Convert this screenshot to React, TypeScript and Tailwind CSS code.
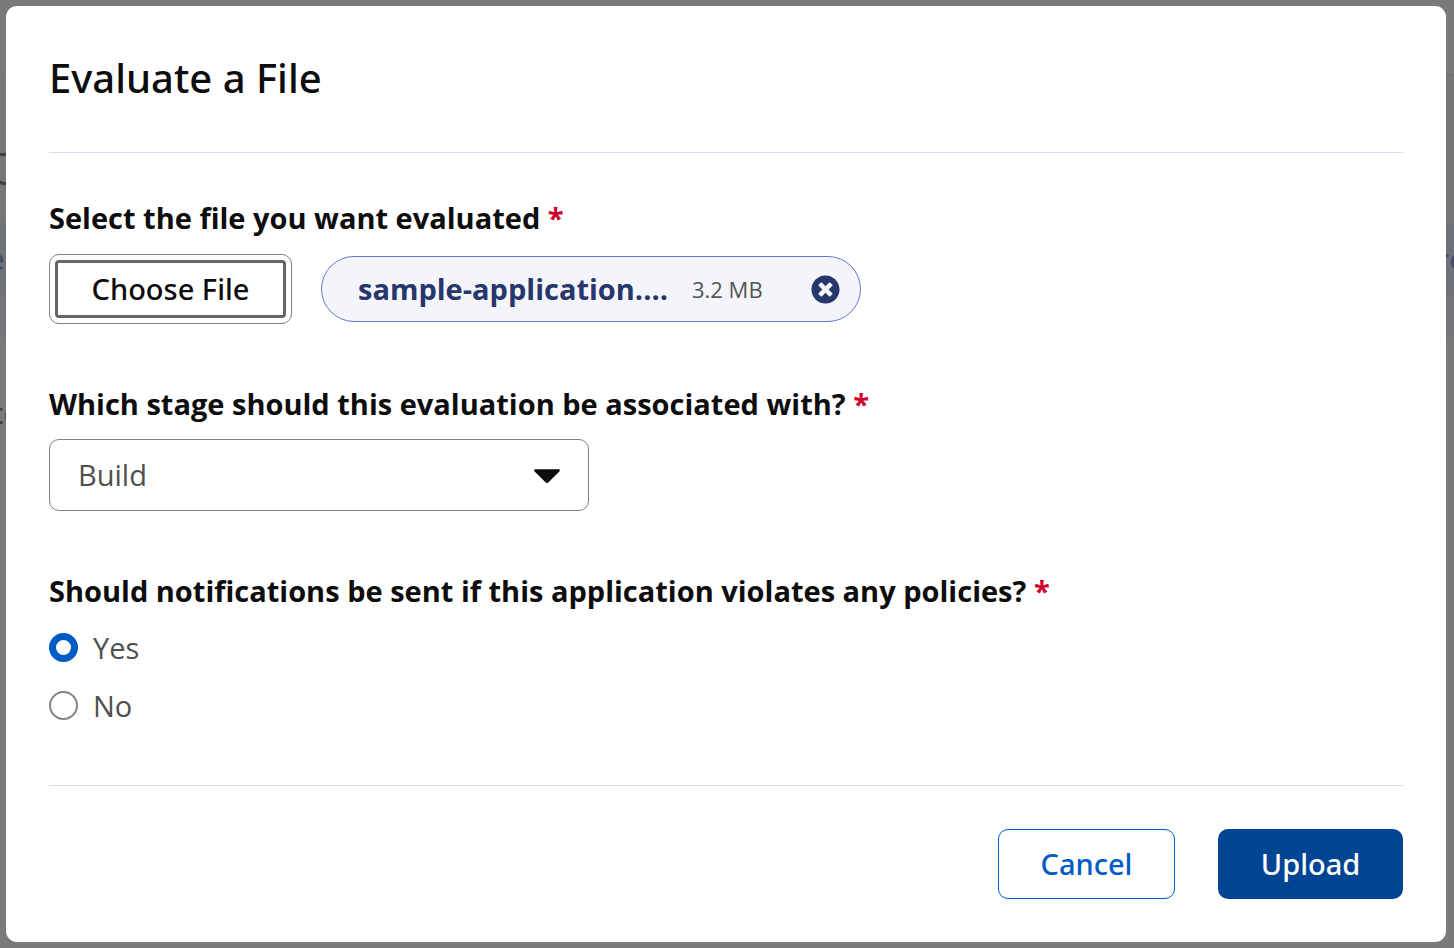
import { useState } from "react";
import type { ReactNode } from "react";

function FieldTitle({ children }: { children: ReactNode }) {
  return (
    <>
      {children} <span className="text-[#d0002f]">*</span>
    </>
  );
}

function PageBehind() {
  return (
    <div
      aria-hidden="true"
      className="col-start-1 row-start-1 flex min-w-0 flex-col overflow-hidden bg-[#7a7a7a] text-[29px] leading-10"
    >
      <div className="h-[74px]" />
      <div className="h-[149px] border-t border-[#727272] bg-[#77777a] pt-[78px]">
        <div className="-ml-1 h-8 w-12 rounded-bl-lg border-[3px] border-[#404040]" />
      </div>
      <div className="flex h-[72px] items-center justify-between bg-[#707279] font-semibold text-[#454d70]">
        <span className="-ml-3">e</span>
        <span className="-mr-3">re</span>
      </div>
      <div className="h-[42px] bg-[#757679]" />
      <div className="flex-1 pt-14 font-semibold text-[#404040]">
        <span className="-ml-2">te</span>
      </div>
    </div>
  );
}

function RadioOption({
  label,
  checked,
  onSelect,
}: {
  label: string;
  checked: boolean;
  onSelect: () => void;
}) {
  return (
    <label className="flex h-[58px] items-center gap-[15px] text-[#505050]">
      <input
        type="radio"
        name="notifications"
        checked={checked}
        onChange={onSelect}
        className="size-[29px] shrink-0 appearance-none rounded-full border-2 border-[#858585] bg-white checked:border-[7px] checked:border-[#005cc5]"
      />
      <span className="pt-0.5">{label}</span>
    </label>
  );
}

export default function App() {
  const [notify, setNotify] = useState(true);
  const [hasFile, setHasFile] = useState(true);

  return (
    <div className="grid min-h-screen grid-cols-1 font-['Open_Sans',sans-serif]">
      <PageBehind />
      <form
        role="dialog"
        aria-labelledby="dialog-title"
        onSubmit={(e) => e.preventDefault()}
        className="z-10 col-start-1 row-start-1 mt-1.5 mr-2 mb-1.5 ml-1.5 flex flex-col rounded-[11px] bg-white px-[43px] pb-[43px] text-[29px] leading-10 text-[#0d0d0d]"
      >
        <header className="border-b border-[#dadaea] pt-[42px] pb-11">
          <h1
            id="dialog-title"
            className="font-['Noto_Sans',sans-serif] text-[40px] leading-[60px] font-medium"
          >
            Evaluate a File
          </h1>
        </header>

        <div className="flex flex-1 flex-col gap-[60px] pt-[45px] pb-12">
          <section>
            <h2 className="font-bold">
              <FieldTitle>Select the file you want evaluated</FieldTitle>
            </h2>
            <div className="mt-4 flex items-center gap-[29px]">
              <button
                type="button"
                onClick={() => setHasFile(true)}
                className="h-[70px] w-[243px] rounded-[10px] border border-[#808080] bg-white font-['Noto_Sans',sans-serif] font-medium outline-3 -outline-offset-9 outline-[#666666]"
              >
                Choose File
              </button>
              {hasFile && (
                <div className="flex h-[66px] w-[540px] items-center rounded-full border border-[#6478c8] bg-[#f4f5fb] pr-5 pl-9">
                  <span className="font-bold text-[#27366b]">sample-application....</span>
                  <span className="ml-6 text-[22px] text-[#555555]">3.2 MB</span>
                  <button
                    type="button"
                    aria-label="Remove file"
                    onClick={() => setHasFile(false)}
                    className="ml-auto"
                  >
                    <svg viewBox="0 0 512 512" className="size-[29px] fill-[#27366b]">
                      <path d="M256 8C119 8 8 119 8 256s111 248 248 248 248-111 248-248S393 8 256 8zm121.600 313.100c4.700 4.700 4.700 12.300 0 17L338 377.600c-4.700 4.700-12.300 4.700-17 0L256 312l-65.100 65.600c-4.700 4.700-12.300 4.700-17 0L134.400 338c-4.700-4.700-4.700-12.300 0-17l65.600-65-65.600-65.100c-4.700-4.700-4.700-12.300 0-17l39.600-39.600c4.700-4.700 12.300-4.700 17 0l65 65.700 65.100-65.600c4.700-4.700 12.300-4.700 17 0l39.600 39.600c4.700 4.700 4.700 12.300 0 17L312 256l65.600 65.100z" />
                    </svg>
                  </button>
                </div>
              )}
            </div>
          </section>

          <section>
            <label htmlFor="stage" className="block font-bold">
              <FieldTitle>Which stage should this evaluation be associated with?</FieldTitle>
            </label>
            <div className="mt-[15px] grid w-[540px] items-center">
              <select
                id="stage"
                defaultValue="Build"
                className="col-start-1 row-start-1 h-[72px] appearance-none rounded-[10px] border border-[#808080] bg-white px-7 text-[#505050]"
              >
                <option>Build</option>
                <option>Stage Release</option>
                <option>Release</option>
              </select>
              <svg
                viewBox="0 0 26 15"
                className="pointer-events-none z-10 col-start-1 row-start-1 mt-0.5 mr-[29px] h-[15px] w-[26px] justify-self-end fill-[#0d0d0d]"
              >
                <path d="M1.300 0.200H24.700C25.900 0.200 26.200 1.600 25.400 2.400L14.300 13.500C13.500 14.300 12.500 14.300 11.700 13.500L0.600 2.400C-0.200 1.600 0.100 0.200 1.300 0.200Z" />
              </svg>
            </div>
          </section>

          <fieldset>
            <legend className="font-bold">
              <FieldTitle>Should notifications be sent if this application violates any policies?</FieldTitle>
            </legend>
            <div className="mt-[7px]">
              <RadioOption label="Yes" checked={notify} onSelect={() => setNotify(true)} />
              <RadioOption label="No" checked={!notify} onSelect={() => setNotify(false)} />
            </div>
          </fieldset>
        </div>

        <footer className="flex justify-end gap-[43px] border-t border-[#dadaea] pt-[43px]">
          <button
            type="button"
            className="h-[70px] w-[177px] rounded-[10px] border border-[#005cc5] bg-white font-['Noto_Sans',sans-serif] font-medium text-[#005cc5]"
          >
            Cancel
          </button>
          <button
            type="submit"
            className="h-[70px] w-[185px] rounded-[10px] bg-[#004494] font-['Noto_Sans',sans-serif] font-medium text-white"
          >
            Upload
          </button>
        </footer>
      </form>
    </div>
  );
}
